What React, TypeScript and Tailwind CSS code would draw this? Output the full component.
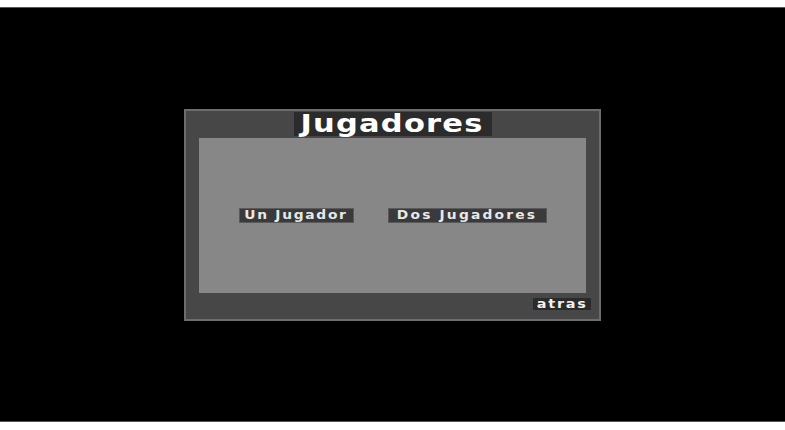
export default function App() {
  const sans = { fontFamily: '"DejaVu Sans", "Verdana", sans-serif' };
  return (
    <div className="w-[785px] h-[430px] bg-white overflow-hidden">
      <div className="mt-[7px] h-[415px] bg-black flex items-center justify-center border-y border-[#555]">
        <div className="w-[417px] h-[212px] border-2 border-[#6c6c6c] bg-[#474747] flex flex-col">
          <div className="h-[27px] flex items-center justify-center">
            <div
              className="h-[24px] w-[198px] bg-[#2b2b2b] flex items-center justify-center text-white font-bold text-[25px] leading-none"
              style={sans}
            >
              <span className="inline-block scale-x-[1.22] tracking-[1px] -mt-[2px]">Jugadores</span>
            </div>
          </div>
          <div className="mx-[13px] h-[155px] bg-[#878787] flex items-center justify-center gap-[34px]">
            <div
              className="h-[15px] w-[115px] bg-[#3a3a3a] border border-[#5a5a5a] flex items-center justify-center text-[#e8e8e8] font-bold text-[12px] leading-none"
              style={sans}
            >
              <span className="inline-block scale-x-[1.15] tracking-[1.5px]">Un Jugador</span>
            </div>
            <div
              className="h-[15px] w-[159px] bg-[#3a3a3a] border border-[#5a5a5a] flex items-center justify-center text-[#e8e8e8] font-bold text-[12px] leading-none"
              style={sans}
            >
              <span className="inline-block scale-x-[1.15] tracking-[1.9px]">Dos Jugadores</span>
            </div>
          </div>
          <div className="flex-1 flex items-center justify-end pr-[8px] pb-[3px]">
            <div
              className="h-[12px] w-[58px] bg-[#2b2b2b] flex items-center justify-center text-[#f0f0f0] font-bold text-[12px] leading-none"
              style={sans}
            >
              <span className="inline-block scale-x-[1.2] tracking-[1.5px] -mt-[1px]">atras</span>
            </div>
          </div>
        </div>
      </div>
    </div>
  );
}
